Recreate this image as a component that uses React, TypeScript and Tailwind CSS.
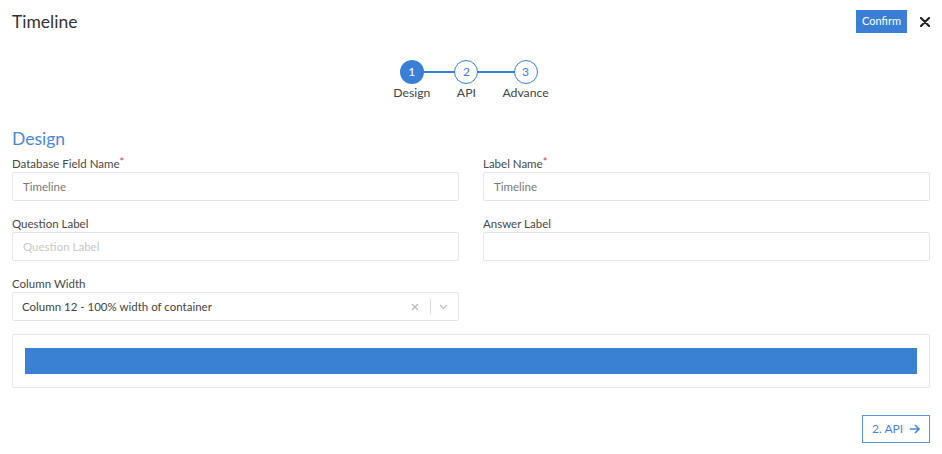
import React from "react";

const font = { fontFamily: "Lato, 'Noto Sans', sans-serif" };

function Field({ label, required, value, placeholder }: { label: string; required?: boolean; value?: string; placeholder?: string }) {
  return (
    <div className="flex flex-col">
      <div className="pt-px text-[11.5px] leading-[16px] text-[#484848]">
        {label}
        {required && <span className="text-[#e0393e] text-[11px] align-top leading-[12px]">*</span>}
      </div>
      <div className="h-[29px] border border-[#e4e6e8] rounded-[2px] flex items-center px-[10px] text-[11.5px]">
        {value ? (
          <span className="text-[#777]">{value}</span>
        ) : placeholder ? (
          <span className="text-[#c8c8c8]">{placeholder}</span>
        ) : null}
      </div>
    </div>
  );
}

function Step({ n, label, active }: { n: number; label: string; active?: boolean }) {
  return (
    <div className="flex flex-col items-center">
      <div
        className={
          active
            ? "relative z-10 w-[24px] h-[24px] rounded-full bg-[#3a7fd5] text-white text-[12px] flex items-center justify-center"
            : "relative z-10 w-[24px] h-[24px] rounded-full bg-white border-[1.5px] border-[#3a7fd5] text-[#3a7fd5] text-[12px] flex items-center justify-center"
        }
      >
        {n}
      </div>
      <div className="mt-px text-[12.25px] leading-[16px] text-[#444]">{label}</div>
    </div>
  );
}

export default function App() {
  return (
    <div style={font} className="w-[942px] h-[454px] bg-white px-3 pt-[10px] relative overflow-hidden">
      <div className="flex items-center justify-between h-[23px]">
        <div className="text-[17.5px] leading-[22px] text-[#333]">Timeline</div>
        <div className="flex items-center">
          <button className="h-[23px] w-[51px] bg-[#3a7fd5] text-white text-[11px] flex items-center justify-center">Confirm</button>
          <svg className="ml-[13px]" width="10" height="10" viewBox="0 0 10 10">
            <path d="M1 1 L9 9 M9 1 L1 9" stroke="#222" strokeWidth="2.2" strokeLinecap="round" />
          </svg>
        </div>
      </div>

      <div className="flex justify-center mt-[27px]">
        <div className="relative flex gap-6">
          <div className="absolute left-[18px] right-[23px] top-[11px] h-[2px] bg-[#3a7fd5]" />
          <Step n={1} label="Design" active />
          <Step n={2} label="API" />
          <Step n={3} label="Advance" />
        </div>
      </div>

      <div className="mt-[27px] text-[17.5px] leading-[22px] text-[#4a88d9]">Design</div>

      <div className="mt-[5px] grid grid-cols-2 gap-x-6 gap-y-[14px]">
        <Field label="Database Field Name" required value="Timeline" />
        <Field label="Label Name" required value="Timeline" />
        <Field label="Question Label" placeholder="Question Label" />
        <Field label="Answer Label" />
        <div className="flex flex-col">
          <div className="pt-px text-[11.5px] leading-[16px] text-[#484848]">Column Width</div>
          <div className="h-[29px] border border-[#e4e6e8] rounded-[2px] flex items-center pl-[9px] pr-[10px] text-[11.5px]">
            <span className="text-[#444] flex-1">Column 12 - 100% width of container</span>
            <svg width="8" height="8" viewBox="0 0 8 8">
              <path d="M1 1 L7 7 M7 1 L1 7" stroke="#bbb" strokeWidth="1.3" />
            </svg>
            <div className="w-px h-[15px] bg-[#ddd] ml-[11px] mr-[8px]" />
            <svg width="9" height="6" viewBox="0 0 9 6">
              <path d="M1 1 L4.5 4.5 L8 1" stroke="#bbb" strokeWidth="1.2" fill="none" />
            </svg>
          </div>
        </div>
        <div />
      </div>

      <div className="mt-[13px] border border-[#e4e6e8] rounded-[2px] px-3 pt-[13px] pb-[13px]">
        <div className="h-[26px] bg-[#3a80d3]" />
      </div>

      <div className="mt-[27px] flex justify-end">
        <button className="h-[28px] w-[68px] border border-[#5b93dd] text-[#4a86d8] text-[12px] flex items-center justify-center gap-[6px]">
          <span>2. API</span>
          <svg width="11" height="10" viewBox="0 0 11 10">
            <path d="M1 5 H10 M6 1 L10 5 L6 9" stroke="#4a86d8" strokeWidth="1.6" fill="none" />
          </svg>
        </button>
      </div>
    </div>
  );
}
